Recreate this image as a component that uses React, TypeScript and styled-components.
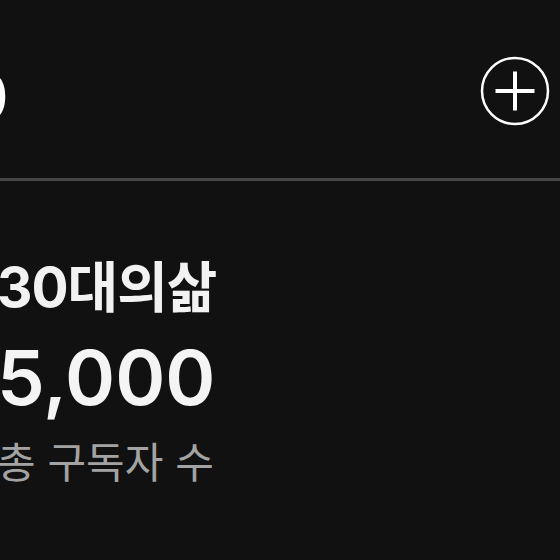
import styled, { createGlobalStyle } from 'styled-components';

const GlobalStyle = createGlobalStyle`
  html, body {
    margin: 0;
    padding: 0;
    background: #111111;
  }
  body {
    font-family: Inter, 'Noto Sans CJK KR', sans-serif;
    overflow: hidden;
  }
`;

const Screen = styled.div`
  width: 560px;
  height: 560px;
  background: #111111;
  color: #f5f5f5;
  overflow: hidden;
`;

const Header = styled.header`
  display: flex;
  align-items: center;
  justify-content: space-between;
  height: 178px;
  padding-top: 4px;
  box-sizing: border-box;
`;

const HeaderTitle = styled.h1`
  margin: 12px 0 0 -35px;
  font-size: 64px;
  font-weight: 700;
  line-height: 1;
  color: #ffffff;
`;

const AddButton = styled.button`
  width: 70px;
  height: 70px;
  margin-right: 10px;
  padding: 0;
  border: none;
  background: transparent;
  cursor: pointer;
  display: flex;
  align-items: center;
  justify-content: center;
`;

const Divider = styled.hr`
  margin: 0;
  border: none;
  height: 3px;
  background: #464646;
`;

const Summary = styled.section`
  display: flex;
  flex-direction: column;
  margin-left: -3px;
  padding-top: 76px;
`;

const ChannelName = styled.div`
  font-size: 55px;
  font-weight: 700;
  line-height: 60px;
  letter-spacing: -1px;
  color: #f2f2f2;
`;

const Count = styled.div`
  margin-top: 20px;
  font-size: 76px;
  font-weight: 600;
  line-height: 80px;
  color: #f4f4f4;
`;

const Caption = styled.div`
  margin-top: 18px;
  font-size: 42px;
  font-weight: 400;
  line-height: 56px;
  color: #a3a3a3;
`;

function PlusCircle() {
  return (
    <svg width="70" height="70" viewBox="0 0 70 70" fill="none">
      <circle cx="35" cy="35" r="33" stroke="#ffffff" strokeWidth="2.5" />
      <path d="M35 15.5V54.5M15.5 35H54.5" stroke="#ffffff" strokeWidth="4" />
    </svg>
  );
}

export default function App() {
  return (
    <>
      <GlobalStyle />
      <Screen>
        <Header>
          <HeaderTitle>0</HeaderTitle>
          <AddButton aria-label="추가">
            <PlusCircle />
          </AddButton>
        </Header>
        <Divider />
        <Summary>
          <ChannelName>30대의삶</ChannelName>
          <Count>5,000</Count>
          <Caption>총 구독자 수</Caption>
        </Summary>
      </Screen>
    </>
  );
}
